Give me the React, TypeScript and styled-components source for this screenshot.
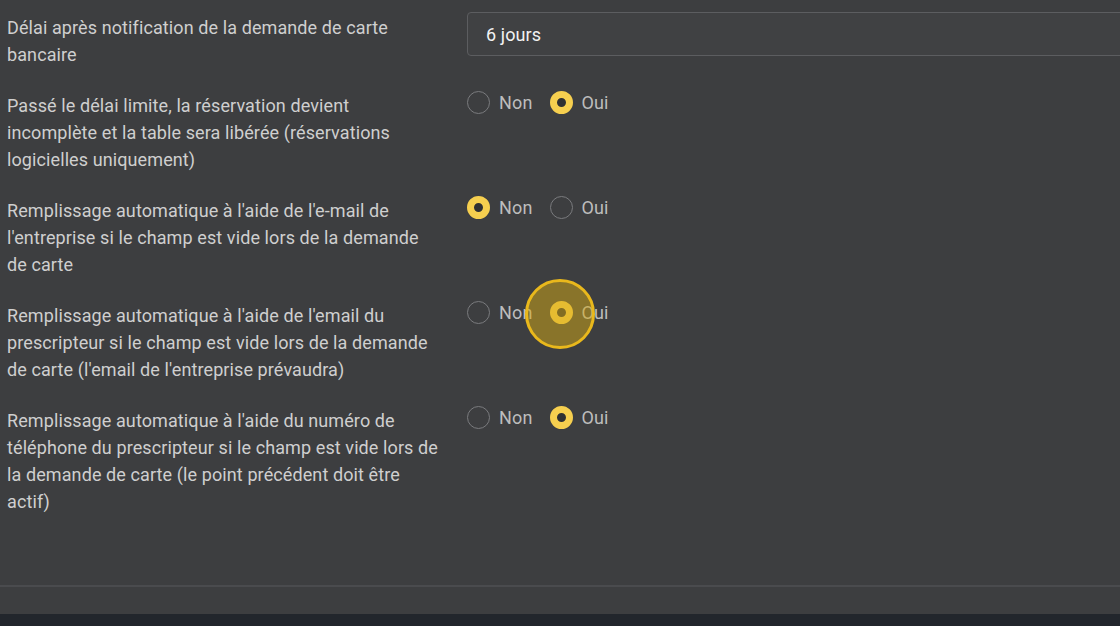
import React, { useState } from 'react';
import styled, { createGlobalStyle } from 'styled-components';

const GlobalStyle = createGlobalStyle`
  html, body {
    margin: 0;
    padding: 0;
    background: #3d3e40;
    overflow: hidden;
  }
  body {
    font-family: Roboto, "Liberation Sans", sans-serif;
  }
`;

const Page = styled.div`
  width: 1120px;
  height: 626px;
  display: flex;
  flex-direction: column;
  background: #3d3e40;
  overflow: hidden;
`;

const Form = styled.div`
  flex: 1;
  display: grid;
  grid-template-columns: 433px 1fr;
  column-gap: 27px;
  row-gap: 24px;
  align-content: start;
  padding: 14px 0 0 7px;
`;

const Label = styled.div`
  font-size: 18px;
  line-height: 27px;
  color: #cfcfcf;
  letter-spacing: 0.1px;
`;

const Control = styled.div<{ $offset?: number }>`
  margin-top: ${p => p.$offset ?? -3}px;
  min-width: 0;
`;

const Input = styled.div`
  height: 44px;
  box-sizing: border-box;
  width: calc(100% + 20px);
  border: 1px solid #5c5d60;
  border-radius: 4px;
  background: #404143;
  display: flex;
  align-items: center;
  padding-left: 18px;
  font-size: 18px;
  letter-spacing: 0.1px;
  color: #f2f2f2;
`;

const RadioGroup = styled.div`
  display: flex;
  align-items: center;
  height: 27px;
  gap: 17px;
`;

const Option = styled.label`
  position: relative;
  display: flex;
  align-items: center;
  gap: 9px;
  font-size: 18px;
  letter-spacing: 0.15px;
  color: #bdbdbd;
  cursor: pointer;
`;

const Dot = styled.span<{ $on: boolean }>`
  width: 23px;
  height: 23px;
  box-sizing: border-box;
  border-radius: 50%;
  flex: none;
  border: ${p => (p.$on ? '7px solid #f6cf4f' : '1px solid #7a7b7e')};
  background: ${p => (p.$on ? '#2f3032' : 'transparent')};
`;

const Ripple = styled.span`
  position: absolute;
  left: -25px;
  top: 50%;
  width: 70px;
  height: 70px;
  margin-top: -34px;
  box-sizing: border-box;
  border-radius: 50%;
  border: 3px solid #e9b81c;
  background: rgba(214, 170, 20, 0.5);
  pointer-events: none;
`;

const Divider = styled.div`
  height: 2px;
  background: #4a4b4e;
  margin-bottom: 27px;
`;

const BottomBar = styled.div`
  height: 12px;
  background: #22262c;
`;

type Row = { label: string; value: 'Non' | 'Oui'; focus?: boolean };

const rows: Row[] = [
  {
    label:
      'Passé le délai limite, la réservation devient incomplète et la table sera libérée (réservations logicielles uniquement)',
    value: 'Oui',
  },
  {
    label:
      "Remplissage automatique à l'aide de l'e-mail de l'entreprise si le champ est vide lors de la demande de carte",
    value: 'Non',
  },
  {
    label:
      "Remplissage automatique à l'aide de l'email du prescripteur si le champ est vide lors de la demande de carte (l'email de l'entreprise prévaudra)",
    value: 'Oui',
    focus: true,
  },
  {
    label:
      "Remplissage automatique à l'aide du numéro de téléphone du prescripteur si le champ est vide lors de la demande de carte (le point précédent doit être actif)",
    value: 'Oui',
  },
];

const App: React.FC = () => {
  const [values, setValues] = useState(rows.map(r => r.value));

  return (
    <Page>
      <GlobalStyle />
      <Form>
        <Label>Délai après notification de la demande de carte bancaire</Label>
        <Control $offset={-2}>
          <Input>6 jours</Input>
        </Control>
        {rows.map((row, i) => (
          <React.Fragment key={i}>
            <Label>{row.label}</Label>
            <Control>
              <RadioGroup>
                {(['Non', 'Oui'] as const).map(opt => (
                  <Option
                    key={opt}
                    onClick={() =>
                      setValues(v => v.map((x, j) => (j === i ? opt : x)))
                    }
                  >
                    <Dot $on={values[i] === opt} />
                    {opt}
                    {row.focus && opt === 'Oui' && <Ripple />}
                  </Option>
                ))}
              </RadioGroup>
            </Control>
          </React.Fragment>
        ))}
      </Form>
      <Divider />
      <BottomBar />
    </Page>
  );
};

export default App;
